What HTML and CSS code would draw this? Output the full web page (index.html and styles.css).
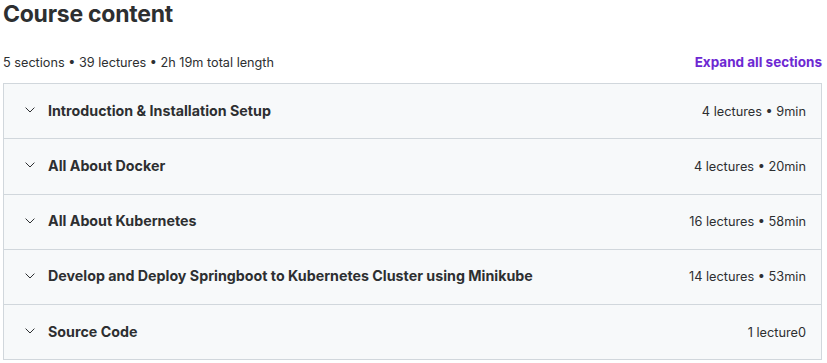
FILE: index.html
```html
<!DOCTYPE html>
<html lang="en">
<head>
    <meta charset="UTF-8">
    <title>Course content</title>
    <link rel="stylesheet" href="styles.css">
</head>
<body>
    <div class="curriculum">
        <h2 class="heading">Course content</h2>

        <div class="summary">
            <span>5 sections • 39 lectures • 2h 19m total length</span>
            <button class="expand-all">Expand all sections</button>
        </div>

        <div class="sections">
            <div class="section">
                <span class="chevron"><svg width="10" height="6" viewBox="0 0 10 6"><path d="M0.6 0.6 L5 5 L9.4 0.6" fill="none" stroke="#2d2f31" stroke-width="1"/></svg></span>
                <span class="section-title">Introduction &amp; Installation Setup</span>
                <span class="section-meta">4 lectures • 9min</span>
            </div>
            <div class="section">
                <span class="chevron"><svg width="10" height="6" viewBox="0 0 10 6"><path d="M0.6 0.6 L5 5 L9.4 0.6" fill="none" stroke="#2d2f31" stroke-width="1"/></svg></span>
                <span class="section-title">All About Docker</span>
                <span class="section-meta">4 lectures • 20min</span>
            </div>
            <div class="section">
                <span class="chevron"><svg width="10" height="6" viewBox="0 0 10 6"><path d="M0.6 0.6 L5 5 L9.4 0.6" fill="none" stroke="#2d2f31" stroke-width="1"/></svg></span>
                <span class="section-title">All About Kubernetes</span>
                <span class="section-meta">16 lectures • 58min</span>
            </div>
            <div class="section">
                <span class="chevron"><svg width="10" height="6" viewBox="0 0 10 6"><path d="M0.6 0.6 L5 5 L9.4 0.6" fill="none" stroke="#2d2f31" stroke-width="1"/></svg></span>
                <span class="section-title">Develop and Deploy Springboot to Kubernetes Cluster using Minikube</span>
                <span class="section-meta">14 lectures • 53min</span>
            </div>
            <div class="section">
                <span class="chevron"><svg width="10" height="6" viewBox="0 0 10 6"><path d="M0.6 0.6 L5 5 L9.4 0.6" fill="none" stroke="#2d2f31" stroke-width="1"/></svg></span>
                <span class="section-title">Source Code</span>
                <span class="section-meta">1 lecture0</span>
            </div>
        </div>
    </div>
</body>
</html>
```

FILE: styles.css
```css
body {
    margin: 0;
    background: #ffffff;
    font-family: Inter, "Noto Sans", sans-serif;
    color: #2d2f31;
}
.curriculum {
    padding: 0 5px 0 3px;
}
.heading {
    margin: 0;
    font-size: 23px;
    font-weight: 700;
    line-height: 28px;
    letter-spacing: -0.25px;
}
.summary {
    display: flex;
    justify-content: space-between;
    align-items: center;
    margin-top: 20px;
    height: 28px;
    font-size: 12.7px;
}
.expand-all {
    background: none;
    border: none;
    padding: 0;
    font-family: inherit;
    font-size: 13.5px;
    font-weight: 700;
    color: #6d28d2;
    cursor: pointer;
}
.sections {
    margin-top: 7px;
    border: 1px solid #d1d7dc;
}
.section {
    display: flex;
    align-items: center;
    height: 54.25px;
    padding: 0 15px 0 21px;
    background: #f7f9fa;
    border-bottom: 1px solid #d1d7dc;
}
.section:last-child {
    border-bottom: none;
}
.chevron {
    display: flex;
    width: 23px;
    margin-top: -2px;
}
.section-title {
    flex: 1;
    font-size: 14.25px;
    font-weight: 700;
    margin-top: -2px;
}
.section-meta {
    font-size: 12.75px;
}
```
